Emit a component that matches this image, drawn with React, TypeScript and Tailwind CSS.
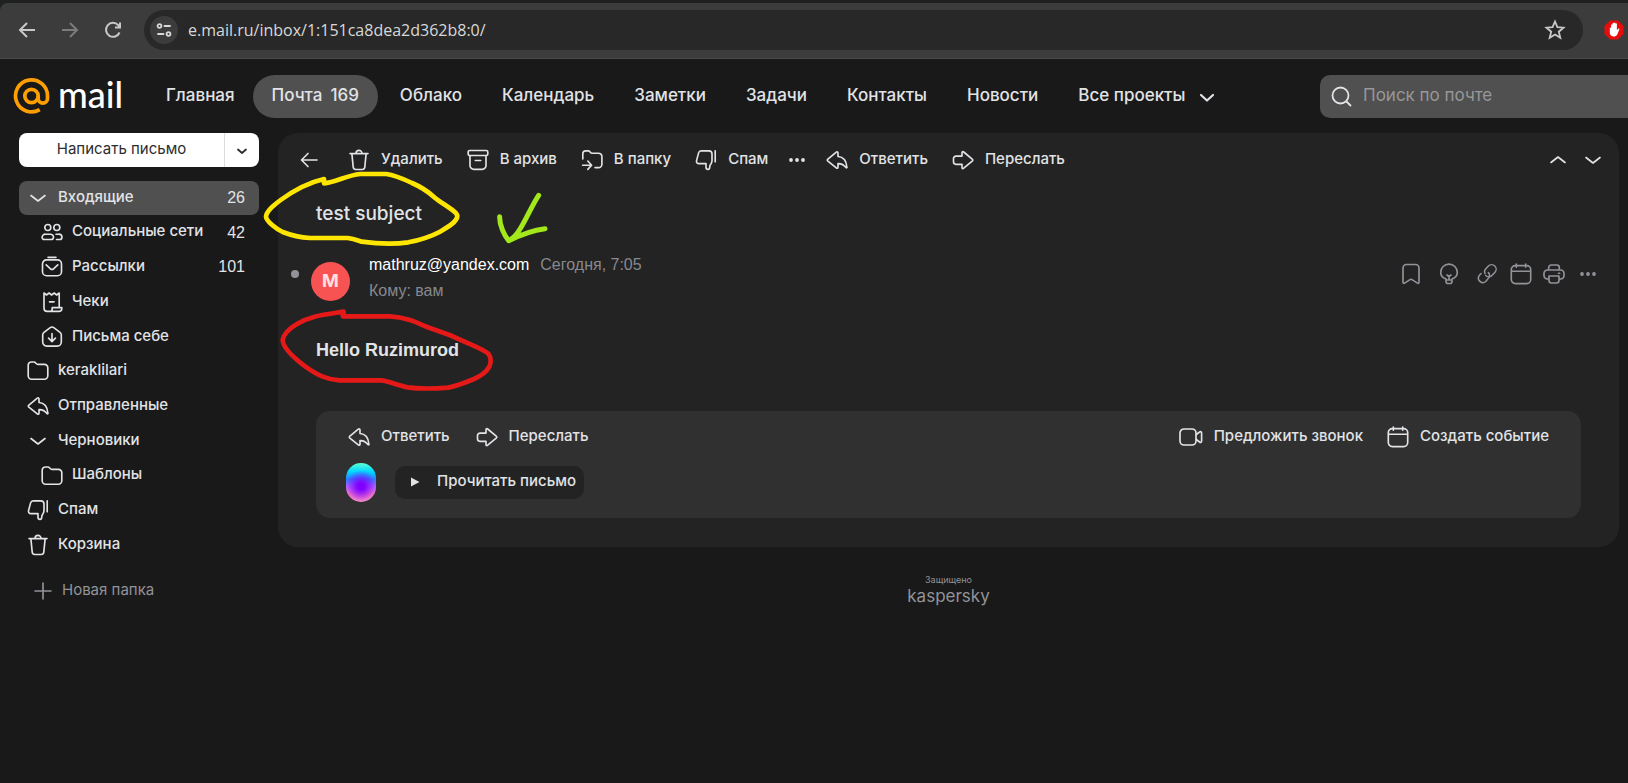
import type { ReactNode } from "react";

type IconProps = { children: ReactNode; className?: string; box?: string };

function Icon({ children, className = "size-[22px]", box = "0 0 22 22" }: IconProps) {
  return (
    <svg
      viewBox={box}
      className={`shrink-0 ${className}`}
      fill="none"
      stroke="currentColor"
      strokeWidth="1.65"
      strokeLinecap="round"
      strokeLinejoin="round"
      aria-hidden="true"
    >
      {children}
    </svg>
  );
}

const ChevronDown = ({ className }: { className?: string }) => (
  <Icon className={className}><path d="M4 8.5 11 14l7-5.5" /></Icon>
);
const ChevronUp = () => <Icon><path d="M4 13.5 11 8l7 5.5" /></Icon>;
const Dots = () => (
  <Icon>
    <g fill="currentColor" stroke="none">
      <circle cx="5" cy="11" r="1.9" /><circle cx="11" cy="11" r="1.9" /><circle cx="17" cy="11" r="1.9" />
    </g>
  </Icon>
);
const Trash = () => (
  <Icon>
    <path d="M2 4.6h18M8 4.4a3 3 0 0 1 6 0M3.9 4.8l1.3 13.4a2.6 2.6 0 0 0 2.6 2.3h6.4a2.6 2.6 0 0 0 2.6-2.3l1.3-13.4" />
  </Icon>
);
const Archive = () => (
  <Icon>
    <rect x="1.2" y="1.5" width="19.6" height="5" rx="1.5" />
    <path d="M3 6.7v9.8a3.8 3.8 0 0 0 3.800 3.800h8.400a3.800 3.800 0 0 0 3.800-3.800V6.700M8.300 11.500h5.400" />
  </Icon>
);
const FolderMove = () => (
  <Icon>
    <path d="M1.800 10V4.800A3 3 0 0 1 4.800 1.800h2.400c2 0 1.800 2.400 4 2.400h6.300a3.400 3.400 0 0 1 3.400 3.400v7.600a3.400 3.400 0 0 1-3.400 3.400H14" />
    <path d="M1.600 16.200H10M6.800 12l3.800 4.200-3.800 4.200" />
  </Icon>
);
const ThumbDown = () => (
  <Icon>
    <path d="M20.200 1.800v11" />
    <path d="M6.200 1.800h7.600a3.200 3.200 0 0 1 3.200 3.200v6.600c0 1.300-.3 2-.9 3l-.8 1.300c-.5.9-.6 1.500-.6 2.400 0 1.300-.6 2.100-1.700 2.100-1.300 0-2-.9-2-2.200v-3.600H4c-1.900 0-2.900-1.300-2.400-3.200L3.600 3.900c.4-1.400 1.200-2.100 2.600-2.100Z" />
  </Icon>
);
const Reply = () => (
  <Icon>
    <path d="M10.300 3.200 1.900 10.200c-.8.7-.8 1.300 0 2l8.400 6.700c.9.7 1.700.3 1.700-.8v-3.500c3.200-.3 5.600 1 8 4 .4.500 1 .3.900-.4-.5-6.300-3.600-10.400-8.900-10.700V4c0-1.100-.8-1.500-1.700-.8Z" />
  </Icon>
);
const Forward = () => (
  <Icon>
    <path d="m11.700 3 8.500 7.200c.8.700.8 1.300 0 2l-8.500 7c-.9.700-1.700.3-1.700-.8v-3.100H4a2.500 2.500 0 0 1-2.500-2.500v-3.200A2.500 2.500 0 0 1 4 7.100h6V3.800c0-1.100.8-1.500 1.700-.8Z" />
  </Icon>
);
const Folder = () => (
  <Icon>
    <path d="M1.200 5.200A3.200 3.200 0 0 1 4.400 2h2.400c2.200 0 2 2.400 4.200 2.400h6.400a3.400 3.400 0 0 1 3.400 3.400v8a3.400 3.400 0 0 1-3.400 3.400H4.600a3.400 3.400 0 0 1-3.400-3.400Z" />
  </Icon>
);
const People = () => (
  <Icon>
    <circle cx="6.800" cy="5.500" r="3" /><circle cx="15.800" cy="5.500" r="3" />
    <path d="M4.500 12.200h5a3 3 0 0 1 3 3c0 1.400-.9 2.300-2.300 2.300H3.400c-1.400 0-2.300-.9-2.300-2.300a3.200 3.200 0 0 1 3.400-3ZM15 12.200h2.800a3.200 3.200 0 0 1 3.200 3c0 1.400-.9 2.300-2.300 2.300h-3.200" />
  </Icon>
);
const Newsletter = () => (
  <Icon>
    <path d="M7 1.300h8M5.500 3.900h11a4 4 0 0 1 4 4v7.800a4 4 0 0 1-4 4h-11a4 4 0 0 1-4-4V7.900a4 4 0 0 1 4-4ZM5.200 8.800l4.300 4a2.200 2.200 0 0 0 3 0l4.300-4" />
  </Icon>
);
const Receipt = () => (
  <Icon>
    <path d="M3 2v15.200a3.200 3.200 0 0 0 3.200 3.200h11.600a3 3 0 0 0 3-3v-.8h-9.600v1.600c0 1.300-1 2.200-2.200 2.200M18.200 16.400V2l-2.500 2-2.500-2-2.600 2-2.500-2-2.600 2L3 2M8.500 10.800h4.600" />
  </Icon>
);
const SelfMail = () => (
  <Icon>
    <path d="M1.700 8.800c0-1.100.4-1.800 1.300-2.500l6.200-4.600a3 3 0 0 1 3.600 0L19 6.300c.9.700 1.300 1.400 1.300 2.500v7.300a4 4 0 0 1-4 4H5.700a4 4 0 0 1-4-4ZM11 7.500v8M7.600 12.200l3.400 3.400 3.400-3.400" />
  </Icon>
);
const Calendar = () => (
  <Icon>
    <path d="M5.300 2.600h11.400a4 4 0 0 1 4 4v10a4 4 0 0 1-4 4H5.300a4 4 0 0 1-4-4v-10a4 4 0 0 1 4-4ZM1.500 8.200h19M6.300 1v3.200M15.700 1v3.200" />
  </Icon>
);
const Video = () => (
  <Icon className="h-[22px] w-6" box="0 0 24 22">
    <rect x="1" y="3" width="16" height="16" rx="4" />
    <path d="m17.300 8.500 3.300-2.500c1-.8 2-.3 2 1v8c0 1.300-1 1.800-2 1l-3.300-2.500" />
  </Icon>
);
const Bookmark = () => (
  <Icon>
    <path d="M3 5a3.500 3.500 0 0 1 3.500-3.500h9A3.500 3.500 0 0 1 19 5v14.300c0 1.100-.8 1.400-1.600.8L12 16.600a1.800 1.800 0 0 0-2 0l-5.400 3.500c-.8.600-1.600.3-1.600-.8Z" />
  </Icon>
);
const Bulb = () => (
  <Icon>
    <path d="M8 17v-1c-3-1.200-5.300-3.800-5.300-6.600a8.300 8.300 0 0 1 16.600 0c0 2.800-2.300 5.400-5.300 6.600v1ZM8 17v1.500c0 1.300.7 2 2 2h2c1.300 0 2-.7 2-2V17M9 12l2 1.500 2-1.500M11 13.500V17" />
  </Icon>
);
const Chain = () => (
  <Icon box="0 0 24 24">
    <path d="M10.500 13.500a4.600 4.600 0 0 0 6.800.2l3.200-3.400a4.900 4.900 0 0 0-7-7l-3 3.200a4.600 4.600 0 0 0-.7 5" />
    <path d="M13.500 10.500a4.600 4.600 0 0 1 .7 5.200l-3.500 4.500a4.900 4.900 0 0 1-7.200-6.500l2-2.200" />
  </Icon>
);
const Printer = () => (
  <Icon>
    <path d="M5.700 7V4.500A2.500 2.500 0 0 1 8.200 2h5.600a2.500 2.500 0 0 1 2.500 2.500V7M5.500 16H4.300A3.300 3.300 0 0 1 1 12.700V10.300A3.300 3.300 0 0 1 4.300 7h13.400a3.300 3.300 0 0 1 3.300 3.300v2.400a3.300 3.300 0 0 1-3.300 3.300h-1.200M6 13h10v4.500a2.500 2.500 0 0 1-2.500 2.500h-5A2.500 2.500 0 0 1 6 17.500ZM15.500 10.200h1.200" />
  </Icon>
);

function BrowserBar() {
  return (
    <div className="bg-[#1f2121] pt-[3px]">
      <div className="flex h-14 items-center rounded-tl-lg border-b border-[#4a4a4a] bg-[#3c3c3c] pr-1 pb-[2px]">
        <div className="flex w-36 shrink-0 items-center gap-[19px] pl-[15px] text-[#c8c8c8]">
          <button aria-label="Назад" className="p-[1px]">
            <Icon><g strokeWidth="2" strokeLinecap="butt"><path d="M19 11H4.500M11 4l-7 7 7 7" strokeLinejoin="miter" /></g></Icon>
          </button>
          <button aria-label="Вперёд" className="p-[1px] text-[#7c7c7c]">
            <Icon><g strokeWidth="2" strokeLinecap="butt"><path d="M3 11h14.500M11 4l7 7-7 7" strokeLinejoin="miter" /></g></Icon>
          </button>
          <button aria-label="Обновить" className="p-[1px]">
            <Icon><path d="M17.500 13.500a7 7 0 1 1-1.300-7.400l1.800 1.900M18 3.500V8.500H13" strokeWidth="2" strokeLinecap="butt" strokeLinejoin="miter" /></Icon>
          </button>
        </div>
        <div className="flex h-10 flex-1 items-center rounded-full bg-[#282828] pr-4 pl-[6px]">
          <button aria-label="Сведения о сайте" className="flex size-7 items-center justify-center rounded-full bg-[#3c3c3c] text-[#d8d8d8]">
            <Icon className="size-4" box="0 0 16 16">
              <g strokeWidth="1.800"><circle cx="3.500" cy="4" r="1.900" /><path d="M8.500 4H14M2 12h5.500" /><circle cx="12.500" cy="12" r="1.900" /></g>
            </Icon>
          </button>
          <input
            aria-label="Адресная строка"
            readOnly
            value="e.mail.ru/inbox/1:151ca8dea2d362b8:0/"
            className="min-w-0 flex-1 bg-transparent pl-[10px] font-['Open_Sans',sans-serif] text-base text-[#d8d8d8] outline-none"
          />
          <button aria-label="Добавить в закладки" className="text-[#c8c8c8]">
            <Icon className="size-6" box="0 0 24 24"><path d="m12 3.500 2.400 5.700 6.100.5-4.700 4 1.500 6.100-5.300-3.300-5.300 3.300 1.500-6.100-4.700-4 6.100-.5Z" strokeWidth="1.800" strokeLinejoin="miter" /></Icon>
          </button>
        </div>
        <button aria-label="Блокировщик рекламы" className="ml-[21px]">
          <svg viewBox="0 0 20 20" className="size-5" aria-hidden="true">
            <path d="M6 .5h8L19.500 6v8L14 19.500H6L.5 14V6Z" fill="#e80c0c" />
            <path d="M5.800 8.200c0-.9 1.300-.9 1.300 0V5c0-1 1.400-1 1.400 0V3.600c0-1 1.500-1 1.500 0V3.200c0-1 1.500-1 1.500 0v.9c0-1 1.400-1 1.400 0v6.200l1.300-1.500c.7-.7 1.600-.1 1.100.8-1.200 2.500-1.800 6.900-5 6.900-3.800 0-4.500-2.300-4.500-4.500Z" fill="#fff" />
          </svg>
        </button>
      </div>
    </div>
  );
}

const navLinks = ["Облако", "Календарь", "Заметки", "Задачи", "Контакты", "Новости"];

function Header() {
  return (
    <header className="flex h-[74px] items-center pt-[1px] text-[17px] font-medium text-[#e1e3e6]">
      <a href="#home" className="flex w-[146px] shrink-0 items-center gap-2 pb-[2px] pl-[13px]">
        <svg viewBox="0 0 37 38" className="h-[38px] w-[37px]" fill="none" stroke="#ff9e00" strokeWidth="3.700" aria-hidden="true">
          <circle cx="18.500" cy="19" r="6.700" />
          <path d="M26.700 32.600A16 16 0 1 1 34.500 19v2.500a4.650 4.650 0 0 1-9.300 0V19" />
        </svg>
        <span className="pb-1 font-['Lato',sans-serif] text-[36px] leading-10 font-medium text-white">mail</span>
      </a>
      <nav className="flex items-center">
        <a href="#main" className="pr-[18px] pb-[2px] pl-5">Главная</a>
        <a href="#mail" className="mr-[2px] flex h-[43px] items-center gap-2 rounded-full bg-[#505050] px-[19px] pb-[2px]">
          <span>Почта</span><span>169</span>
        </a>
        {navLinks.map((label) => (
          <a key={label} href="#project" className="px-5 pb-[2px]">{label}</a>
        ))}
        <button className="flex items-center gap-3 pl-5 whitespace-nowrap">
          <span className="pb-[2px]">Все проекты</span>
          <Icon className="size-5" box="0 0 20 20"><path d="m4 8 6 5.500L16 8" strokeWidth="2.200" /></Icon>
        </button>
      </nav>
      <label className="ml-auto flex h-[43px] w-[308px] shrink-0 items-center gap-[10px] rounded-l-[10px] bg-[#505050] pl-[11px]">
        <Icon><circle cx="9.500" cy="9.500" r="8" strokeWidth="1.800" /><path d="m15.500 15.500 4 4" strokeWidth="1.800" /></Icon>
        <input placeholder="Поиск по почте" aria-label="Поиск по почте" className="min-w-0 flex-1 bg-transparent pb-[2px] text-[17px] font-normal outline-none placeholder:text-[#989898]" />
      </label>
    </header>
  );
}

type FolderRow = { label: string; icon: ReactNode; count?: number; nested?: boolean; active?: boolean };

const folders: FolderRow[] = [
  { label: "Входящие", icon: <ChevronDown />, count: 26, active: true },
  { label: "Социальные сети", icon: <People />, count: 42, nested: true },
  { label: "Рассылки", icon: <Newsletter />, count: 101, nested: true },
  { label: "Чеки", icon: <Receipt />, nested: true },
  { label: "Письма себе", icon: <SelfMail />, nested: true },
  { label: "keraklilari", icon: <Folder /> },
  { label: "Отправленные", icon: <Reply /> },
  { label: "Черновики", icon: <ChevronDown /> },
  { label: "Шаблоны", icon: <Folder />, nested: true },
  { label: "Спам", icon: <ThumbDown /> },
  { label: "Корзина", icon: <Trash /> },
];

function Sidebar() {
  return (
    <aside className="w-[278px] shrink-0 pr-[19px] pl-[19px] text-[15px] font-medium">
      <div className="flex h-[34px] overflow-hidden rounded-lg bg-white font-normal text-[#2c2d2e]">
        <button className="flex-1 border-r border-[#dadce0] pb-[2px]">Написать письмо</button>
        <button aria-label="Другие действия" className="flex w-[34px] items-center justify-center">
          <Icon className="size-4" box="0 0 16 16"><path d="m4 7.500 4 3.500 4-3.500" strokeWidth="1.800" /></Icon>
        </button>
      </div>
      <ul className="mt-[14px] flex h-[381px] flex-col justify-between">
        {folders.map((f) => (
          <li key={f.label}>
            <a
              href="#folder"
              className={`flex h-[34px] items-center gap-[9px] rounded-lg pr-[14px] ${f.nested ? "pl-[22px]" : "pl-2"} ${f.active ? "bg-[#505050]" : ""}`}
            >
              {f.icon}
              <span className="flex-1 pb-[2px]">{f.label}</span>
              {f.count && <span className="font-['Liberation_Sans',Arial,sans-serif] text-base font-normal">{f.count}</span>}
            </a>
          </li>
        ))}
      </ul>
      <button className="mt-3 flex h-[34px] items-center gap-2 pl-[13px] font-normal text-[#919399]">
        <Icon><path d="M11 3v16M3 11h16" /></Icon>
        <span className="pb-[2px]">Новая папка</span>
      </button>
    </aside>
  );
}

function Action({ icon, label }: { icon: ReactNode; label: string }) {
  return (
    <button className="flex items-center gap-[11px] whitespace-nowrap">
      {icon}
      <span className="pb-[1px]">{label}</span>
    </button>
  );
}

function Annotations() {
  return (
    <svg viewBox="0 0 1260 870" className="pointer-events-none absolute -top-[13px] -left-[18px] h-[290px] w-[420px]" fill="none" strokeWidth="14" strokeLinecap="round" strokeLinejoin="round" aria-hidden="true">
      <path stroke="#ffe600" d="M192 177v13c36-3 66-24 109-28h78c25 3 54 16 77 27 30 13 47 25 65 41 23 21 70 43 71 58-1 17-27 33-52 47-30 16-56 24-95 32-45 6-94 4-140-2-15-5-25-9-42-11H150c-31-2-56-8-82-18-21-10-49-32-50-46 1-17 24-35 44-50 40-29 82-52 130-63" />
      <path stroke="#e61919" d="M251 579c-4 4-4 6-2 10h141c22 1 40 5 60 11 22 7 42 18 66 26 42 13 75 27 109 44 27 12 46 19 60 31 9 12 8 27 3 39-9 17-21 26-46 37-25 10-50 21-78 26-41 3-86 4-122-1-18-4-36-10-58-17-12-3-12-4-20-4H239c-16-1-34-4-51-11-30-13-52-29-73-47-25-21-46-44-47-63 3-18 17-33 43-48 44-27 90-29 140-37" />
      <path stroke="#a2e81a" strokeWidth="15" d="M836 226c-20 30-35 67-54 98-10 17-20 30-36 38M719 290c-1 25 14 57 27 72 36-18 70-31 109-36" />
    </svg>
  );
}

function MessagePane() {
  return (
    <section className="relative rounded-[20px] bg-[#232323] pr-[38px] pb-[29px] pl-[38px]">
      <div className="-mr-[23px] -ml-[18px] flex h-[53px] items-center gap-6 text-[15px] font-medium">
        <button aria-label="Назад" className="mr-1"><Icon><path d="M19 11H4M10 4.500 3.500 11l6.500 6.500" /></Icon></button>
        <Action icon={<Trash />} label="Удалить" />
        <Action icon={<Archive />} label="В архив" />
        <Action icon={<FolderMove />} label="В папку" />
        <Action icon={<ThumbDown />} label="Спам" />
        <button aria-label="Ещё" className="-mx-[6px]"><Dots /></button>
        <Action icon={<Reply />} label="Ответить" />
        <Action icon={<Forward />} label="Переслать" />
        <div className="ml-auto flex gap-[13px]">
          <button aria-label="Предыдущее"><ChevronUp /></button>
          <button aria-label="Следующее"><ChevronDown /></button>
        </div>
      </div>
      <h1 className="mt-[14px] text-[19px] leading-7 font-medium">test subject</h1>
      <div className="-mr-[18px] -ml-[25px] mt-[22px] flex h-12 items-center font-['Liberation_Sans',Arial,sans-serif] text-base">
        <span className="size-2 rounded-full bg-[#919399]" />
        <span className="mt-[14px] ml-3 flex size-[39px] items-center justify-center rounded-full bg-[#f75353] font-['Inter',sans-serif] text-lg font-bold text-[#ffe0e0]">M</span>
        <div className="mt-2 ml-[19px]">
          <div className="flex gap-[11px] leading-[26px]"><span className="text-white">mathruz@yandex.com</span><span className="text-[#87898f]">Сегодня, 7:05</span></div>
          <div className="leading-[26px] text-[#87898f]">Кому: вам</div>
        </div>
        <div className="ml-auto flex text-[#919399]">
          <button aria-label="Закладка" className="mr-4"><Bookmark /></button>
          <button aria-label="Подсказка" className="mr-4"><Bulb /></button>
          <button aria-label="Ссылка" className="mr-3"><Chain /></button>
          <button aria-label="Событие" className="mr-[11px]"><Calendar /></button>
          <button aria-label="Печать" className="mr-3"><Printer /></button>
          <button aria-label="Ещё"><Dots /></button>
        </div>
      </div>
      <p className="mt-[38px] font-['Liberation_Sans',Arial,sans-serif] text-lg leading-7 font-bold">Hello Ruzimurod</p>
      <div className="mt-[47px] flex flex-col gap-[14px] rounded-[14px] bg-[#303030] px-[30px] pt-[14px] pb-4">
        <div className="flex items-center pr-[2px] text-[15px] font-medium">
          <div className="ml-[2px] flex gap-[26px]">
            <Action icon={<Reply />} label="Ответить" />
            <Action icon={<Forward />} label="Переслать" />
          </div>
          <div className="ml-auto flex gap-6">
            <Action icon={<Video />} label="Предложить звонок" />
            <Action icon={<Calendar />} label="Создать событие" />
          </div>
        </div>
        <div className="flex items-center gap-[19px]">
          <span className="h-[39px] w-[30px] rounded-full bg-[radial-gradient(circle_at_50%_60%,#8000ff_0%,#8000ff_12%,transparent_58%),linear-gradient(#5effd0_0%,#00d8ff_22%,#2a80ff_42%,#c070ff_62%,#ff80c0_80%,#ff9ac8_100%)]" />
          <button className="flex h-[33px] items-center gap-[17px] rounded-[10px] bg-[#232323] pr-2 pl-[15px] text-[15px] font-medium">
            <svg viewBox="0 0 10 10" className="size-[10px]" fill="currentColor" aria-hidden="true"><path d="M1 .5v9L9.500 5Z" /></svg>
            <span className="pb-[2px]">Прочитать письмо</span>
          </button>
        </div>
      </div>
      <Annotations />
    </section>
  );
}

export default function App() {
  return (
    <div className="flex min-h-screen flex-col bg-[#191919] font-['Inter',sans-serif] text-[#e1e3e6]">
      <BrowserBar />
      <Header />
      <div className="flex">
        <Sidebar />
        <main className="min-w-0 flex-1 pr-[9px]">
          <MessagePane />
          <footer className="mt-[27px] flex flex-col items-center text-[#919399]">
            <span className="text-[9px] leading-3">Защищено</span>
            <span className="text-[17px] leading-5">kaspersky</span>
          </footer>
        </main>
      </div>
    </div>
  );
}
